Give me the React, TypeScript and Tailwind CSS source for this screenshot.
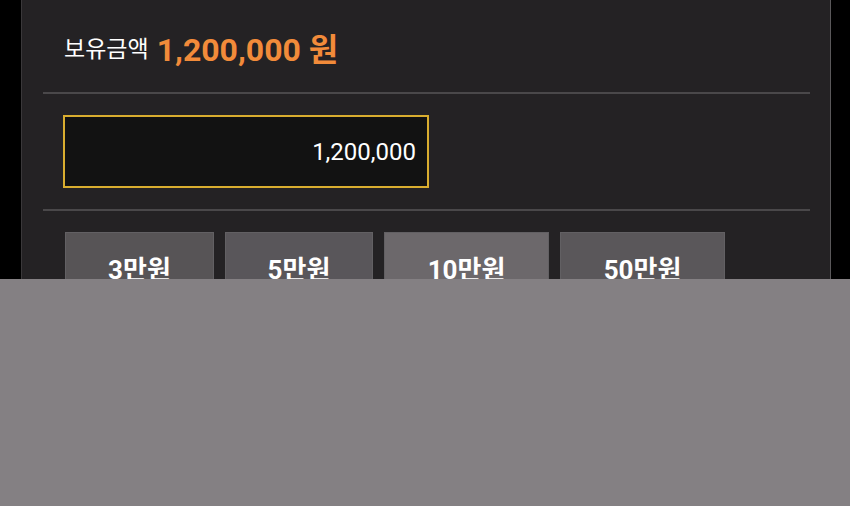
const amounts = [
  { label: '3만원', w: 'w-[149px]', bg: 'bg-[#575456]' },
  { label: '5만원', w: 'w-[148px]', bg: 'bg-[#59565a]' },
  { label: '10만원', w: 'w-[165px]', bg: 'bg-[#6c686b]' },
  { label: '50만원', w: 'w-[165px]', bg: 'bg-[#5a575a]' },
]

export default function App() {
  return (
    <div
      className="relative w-[850px] h-[506px] overflow-hidden bg-black"
      style={{ fontFamily: "Roboto, 'Noto Sans CJK KR', sans-serif" }}
    >
      <div className="ml-[21px] w-[810px] h-full bg-[#242224] border-l border-l-[#3a383a] border-r border-r-[#5a585a]">
        {/* balance header */}
        <div className="h-[92px] flex items-center pt-[8px] pl-[42px] gap-[8px]">
          <span className="text-[23px] text-white">보유금액</span>
          <span className="text-[32px] font-bold text-[#f28b3a]">1,200,000 원</span>
        </div>
        <div className="ml-[21px] mr-[20px] h-[2px] bg-[#4a484a]" />

        {/* amount input */}
        <div className="pt-[21px] pb-[21px] pl-[41px]">
          <div className="w-[366px] h-[73px] border-2 border-[#d9ad2f] bg-[#121212] flex items-center justify-end pr-[11px]">
            <span className="text-[24px] text-white">1,200,000</span>
          </div>
        </div>
        <div className="ml-[21px] mr-[20px] h-[2px] bg-[#4a484a]" />

        {/* quick amount buttons */}
        <div className="flex gap-[11px] pl-[43px] pt-[21px]">
          {amounts.map((a) => (
            <button
              key={a.label}
              className={`${a.w} ${a.bg} h-[72px] pt-[4px] border border-[#626063] text-white text-[26px] font-bold flex items-center justify-center`}
            >
              {a.label}
            </button>
          ))}
        </div>
      </div>

      {/* keypad sheet */}
      <div className="absolute left-0 right-0 top-[279px] bottom-0 bg-[#848083]" />
    </div>
  )
}
